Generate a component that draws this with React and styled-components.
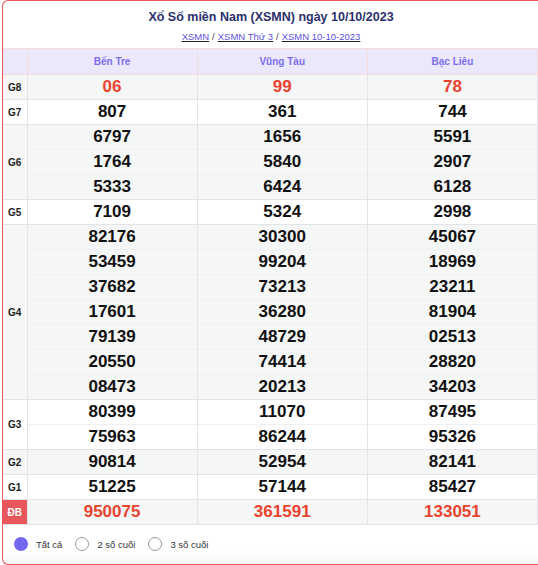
import React, { useState } from "react";
import styled, { createGlobalStyle } from "styled-components";

const GlobalStyle = createGlobalStyle`
  body {
    margin: 0;
    font-family: "Liberation Sans", Arial, sans-serif;
    background: #ffffff;
    overflow: hidden;
  }
`;

const Box = styled.div`
  box-sizing: border-box;
  width: 537px;
  height: 565px;
  margin-left: 2px;
  border: 1px solid #e9555a;
  border-right: none;
  border-radius: 6px 0 0 6px;
  overflow: hidden;
  display: flex;
  flex-direction: column;
  background: linear-gradient(to bottom, #fff 0, #fff 550px, #f4f4f4 565px);
`;

const Header = styled.div`
  display: flex;
  flex-direction: column;
  align-items: center;
  padding-top: 8px;
  height: 47px;
  box-sizing: border-box;
`;

const Title = styled.h1`
  margin: 0;
  font-size: 12.5px;
  line-height: 16px;
  font-weight: bold;
  color: #2c2f6c;
`;

const Crumbs = styled.div`
  margin-top: 5px;
  font-size: 9.5px;
  line-height: 14px;
  color: #444;
  display: flex;
  gap: 3px;
`;

const Crumb = styled.a`
  color: #5a50dc;
  text-decoration: underline;
  text-decoration-color: #222;
  cursor: pointer;
`;

const Table = styled.table`
  width: 535px;
  table-layout: fixed;
  border-collapse: collapse;
`;

const HeadCell = styled.th`
  height: 25px;
  padding: 0;
  background: #ece8fc;
  border-top: 1px solid #f6dcd8;
  border-bottom: 1px solid #f6dcd8;
  border-left: 1px solid #f1dedd;
  border-right: 1px solid #f1dedd;
  font-size: 10px;
  font-weight: bold;
  color: #7b6ef0;
  &:first-child {
    border-left: none;
  }
`;

const Row = styled.tr`
  height: 25px;
  background: ${(p) => (p.$shade ? "#f5f6f6" : "#ffffff")};
  border-top: 1px solid ${(p) => (p.$first ? "#e2e4e8" : "#eef0f2")};
  &:last-child {
    border-bottom: 1px solid #e2e4e8;
  }
`;

const LabelCell = styled.td`
  padding: 0;
  text-align: center;
  vertical-align: middle;
  font-size: 10px;
  font-weight: bold;
  color: ${(p) => (p.$special ? "#ffffff" : "#222")};
  background: ${(p) => (p.$special ? "#e8575b" : "inherit")};
  border-right: 1px solid #e2e4e8;
  border-bottom: 1px solid #e2e4e8;
`;

const NumCell = styled.td`
  padding: 0;
  text-align: center;
  font-size: 17px;
  font-weight: bold;
  line-height: 20px;
  color: ${(p) => (p.$red ? "#e8432f" : "#111")};
  border-left: 1px solid #e2e4e8;
  border-right: 1px solid #e2e4e8;
`;

const Options = styled.div`
  display: flex;
  align-items: center;
  padding: 12px 0 0 11px;
`;

const Option = styled.label`
  display: flex;
  align-items: center;
  font-size: 9.5px;
  color: #333;
  margin-right: 13px;
  cursor: pointer;
`;

const Radio = styled.span`
  box-sizing: border-box;
  width: 14px;
  height: 14px;
  border-radius: 50%;
  margin-right: 8px;
  border: ${(p) => (p.$on ? "none" : "1px solid #9a9a9a")};
  background: ${(p) => (p.$on ? "#7366f0" : "#fff")};
`;

const provinces = ["Bến Tre", "Vũng Tàu", "Bạc Liêu"];

const prizes = [
  { label: "G8", red: true, cols: [["06"], ["99"], ["78"]] },
  { label: "G7", cols: [["807"], ["361"], ["744"]] },
  {
    label: "G6",
    cols: [
      ["6797", "1764", "5333"],
      ["1656", "5840", "6424"],
      ["5591", "2907", "6128"],
    ],
  },
  { label: "G5", cols: [["7109"], ["5324"], ["2998"]] },
  {
    label: "G4",
    cols: [
      ["82176", "53459", "37682", "17601", "79139", "20550", "08473"],
      ["30300", "99204", "73213", "36280", "48729", "74414", "20213"],
      ["45067", "18969", "23211", "81904", "02513", "28820", "34203"],
    ],
  },
  {
    label: "G3",
    cols: [
      ["80399", "75963"],
      ["11070", "86244"],
      ["87495", "95326"],
    ],
  },
  { label: "G2", cols: [["90814"], ["52954"], ["82141"]] },
  { label: "G1", cols: [["51225"], ["57144"], ["85427"]] },
  { label: "ĐB", red: true, special: true, cols: [["950075"], ["361591"], ["133051"]] },
];

const modes = ["Tất cả", "2 số cuối", "3 số cuối"];

export default function App() {
  const [mode, setMode] = useState(0);
  return (
    <>
      <GlobalStyle />
      <Box>
        <Header>
          <Title>Xổ Số miền Nam (XSMN) ngày 10/10/2023</Title>
          <Crumbs>
            <Crumb>XSMN </Crumb>/<Crumb>XSMN Thứ 3 </Crumb>/<Crumb>XSMN 10-10-2023</Crumb>
          </Crumbs>
        </Header>
        <Table>
          <colgroup>
            <col style={{ width: 24 }} />
            <col />
            <col />
            <col />
          </colgroup>
          <thead>
            <tr>
              <HeadCell />
              {provinces.map((p) => (
                <HeadCell key={p}>{p}</HeadCell>
              ))}
            </tr>
          </thead>
          <tbody>
            {prizes.flatMap((g, gi) =>
              g.cols[0].map((_, ri) => (
                <Row key={g.label + ri} $shade={gi % 2 === 0} $first={ri === 0}>
                  {ri === 0 && (
                    <LabelCell rowSpan={g.cols[0].length} $special={g.special}>
                      {g.label}
                    </LabelCell>
                  )}
                  {g.cols.map((c, ci) => (
                    <NumCell key={ci} $red={g.red}>
                      {c[ri]}
                    </NumCell>
                  ))}
                </Row>
              ))
            )}
          </tbody>
        </Table>
        <Options>
          {modes.map((m, i) => (
            <Option key={m} onClick={() => setMode(i)}>
              <Radio $on={mode === i} />
              {m}
            </Option>
          ))}
        </Options>
      </Box>
    </>
  );
}
